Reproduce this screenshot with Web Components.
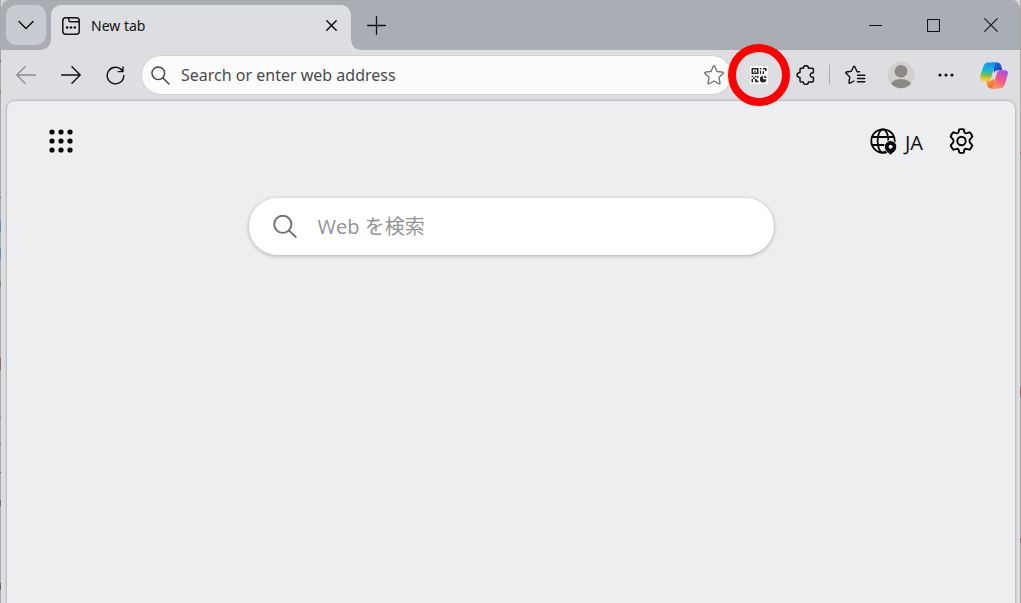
<!DOCTYPE html>
<html lang="ja">
<head>
<meta charset="utf-8">
<title>New tab</title>
<style>
  html, body { height: 100%; }
  body {
    margin: 0;
    /* slivers of the windows behind show at both edges */
    background:
      linear-gradient(#a9a9a9 60px, #8a6a50 60px 62px, #a9a9a9 62px 90px, #a87f5c 90px 93px, #a9a9a9 93px 197px, #6c6558 197px 198px, #a9a9a9 198px 220px, #6f8fb9 220px 232px, #a9a9a9 232px 248px, #6f8fb9 248px 260px, #a9a9a9 260px 281px, #3899b0 281px 284px, #9c8a45 284px 287px, #a9a9a9 287px 358px, #8d6a60 358px 370px, #a9a9a9 370px 417px, #7d8795 417px 419px, #a9a9a9 419px 444px, #666 444px 445px, #a9a9a9 445px 472px, #666 472px 473px, #a9a9a9 473px 500px, #796b73 500px 506px, #a9a9a9 506px 583px, #67647a 583px 590px, #a9a9a9 590px) 0 0 / 1px 100% no-repeat,
      linear-gradient(#a9a9a9 152px, #96736f 152px 154px, #a9a9a9 154px 387px, #a2605c 387px 397px, #a9a9a9 397px 538px, #96736f 538px 543px, #a9a9a9 543px) 100% 0 / 1px 100% no-repeat,
      #d9d9d9;
    color: #1b1b1b;
    font-family: "Noto Sans", "Noto Sans CJK JP", sans-serif;
  }
</style>
</head>
<body>
<browser-window>
  <tab-strip slot="tabs">
    <browser-tab>New tab</browser-tab>
  </tab-strip>
  <tool-bar slot="toolbar"></tool-bar>
  <new-tab-page language="JA"></new-tab-page>
</browser-window>

<script>
const line = (w, h, vb, body, sw = 1.4, extra = '') =>
  `<svg width="${w}" height="${h}" viewBox="${vb}" fill="none" stroke="currentColor" stroke-width="${sw}" stroke-linecap="round" stroke-linejoin="round" aria-hidden="true" ${extra}>${body}</svg>`;

const ICONS = {
  chevron: line(16, 10, '0 0 16 10', '<path d="M1 1.5 8 8.5 15 1.5"/>', 1.5),
  page: line(18, 18, '0 0 18 18', '<rect x=".8" y=".8" width="16.4" height="16.4" rx="3"/><path d="M6.8 1V3.2Q6.8 4.8 8.4 4.8H17" stroke-width="1.4"/><g fill="currentColor" stroke="none"><circle cx="5.2" cy="10.5" r="1.3"/><circle cx="9" cy="10.5" r="1.3"/><circle cx="12.8" cy="10.5" r="1.3"/></g>', 1.5),
  cross: line(11, 11, '0 0 11 11', '<path d="M.8.8 10.2 10.2M10.2.8.8 10.2"/>', 1.5),
  plus: line(19, 19, '0 0 19 19', '<path d="M9.5.7V18.3M.7 9.5H18.3"/>', 1.3),
  minimize: line(13, 13, '0 0 13 13', '<path d="M0 6.5H13"/>', 1),
  maximize: line(13, 13, '0 0 13 13', '<rect x=".5" y=".5" width="12" height="12" rx=".6"/>', 1.1),
  close: line(14, 14, '0 0 14 14', '<path d="M.7.7 13.3 13.3M13.3.7.7 13.3"/>', 1.1),
  back: line(20, 18, '0 0 20 18', '<path d="M.8 9H19.5M9 .8.8 9 9 17.2"/>', 1.3),
  forward: line(20, 18, '0 0 20 18', '<path d="M.5 9H19.2M11 .8 19.2 9 11 17.2"/>', 1.4),
  reload: line(19, 19, '0 0 19 19', '<path d="M16.6 5.2A8.3 8.3 0 1 0 17.8 9.5M17 1V5.6H12.2"/>', 1.4),
  search: line(19, 19, '0 0 19 19', '<circle cx="7.3" cy="7.3" r="6.3"/><path d="M11.9 11.9 18 18"/>', 1.4),
  bigSearch: line(24, 24, '0 0 24 24', '<circle cx="9.8" cy="9.3" r="8.6"/><path d="M16.2 15.6 22.7 22"/>', 1.9),
  star: line(20, 20, '0 0 20 20', '<path d="M9.3 1.3Q10 .1 10.7 1.3L13 6.5 18.6 7.2Q19.9 7.6 19 8.6L14.9 12.4 16 18Q16.1 19.3 14.9 18.8L10 16 5.1 18.8Q3.9 19.3 4 18L5.1 12.4 1 8.6Q.1 7.6 1.4 7.2L7 6.5Z"/>', 1.3),
  qr: `<svg width="18" height="18" viewBox="0 0 18 18" aria-hidden="true"><rect width="18" height="18" rx="1" fill="#fff"/><g fill="#252525"><path fill-rule="evenodd" d="M1.5 2h7v6h-7zM3 3.5v3h4v-3z"/><path d="M4.2 4.4h1.6v1.4H4.2zM9.9 2h1.6v1.5H9.9zM9.9 4.8h1.2V8H9.9zM13 2h3.5v3H15V3.5h-2zM12.6 5.2h1.5V8h-1.5zM1.5 9.7h1.7v1.5H1.5zM5 9.7h1.6v1.6H5zM3.2 11.3H5v1.6H3.2zM7.2 9.7h1.3v2.5H7.2zM1.5 12.9H3v3.4H1.5zM5 13h1.8v1.6h1.7v1.7H5z"/><path d="M13.1 10.1A3.2 3.2 0 1 0 16.3 13.3H13.1zM14.3 9.5v2.6h2.5Q16.5 10 14.3 9.5z"/></g></svg>`,
  puzzle: line(20, 20, '0 0 20 20', '<path d="M5.2 3.2H7.3C7.3-.1 12.5-.1 12.5 3.2H16.2Q17.4 3.2 17.4 4.4V7.8C13.2 7.1 13.2 13 17.4 12.3V15.7Q17.4 16.9 16.2 16.9H12.5C12.5 20.2 7.3 20.2 7.3 16.9H5.2Q4 16.9 4 15.7V12.4C.1 12.4.1 7.6 4 7.6V4.4Q4 3.2 5.2 3.2Z"/>', 1.5),
  favorites: line(21, 20, '0 0 21 20', '<path d="M12 6.5 9.8 1.7Q9.2.6 8.6 1.7L6.3 6.3 1.5 7Q.2 7.4 1.1 8.3L4.8 12 4 17.3Q3.9 18.6 5 18.1L9 16"/><path d="M12.3 6.8H14.5M12.5 10.2H19.8M12.5 13.5H19.8M12.5 16.8H19.8"/>', 1.4),
  avatar: `<svg width="28" height="28" viewBox="0 0 28 28" aria-hidden="true"><defs><clipPath id="round"><circle cx="14" cy="14" r="13.2"/></clipPath></defs><circle cx="14" cy="14" r="13.5" fill="#d2d0cc"/><g fill="#8b8886" clip-path="url(#round)"><circle cx="14" cy="10.2" r="6.3"/><ellipse cx="14" cy="25.4" rx="10.8" ry="7.5"/></g></svg>`,
  more: '<svg width="16" height="4" viewBox="0 0 16 4" fill="currentColor" aria-hidden="true"><circle cx="2" cy="2" r="1.6"/><circle cx="8" cy="2" r="1.6"/><circle cx="14" cy="2" r="1.6"/></svg>',
  copilot: `<svg width="28" height="27" viewBox="0 0 28 27" aria-hidden="true"><defs>
    <linearGradient id="l" x1=".4" y1="0" x2=".3" y2="1"><stop offset="0" stop-color="#1793ed"/><stop offset=".4" stop-color="#19b5d8"/><stop offset=".65" stop-color="#61bd68"/><stop offset=".9" stop-color="#f2cb1b"/></linearGradient>
    <linearGradient id="r" x1=".8" y1="0" x2=".3" y2="1"><stop offset="0" stop-color="#a64ee8"/><stop offset=".5" stop-color="#f0568d"/><stop offset="1" stop-color="#ff9a5b"/></linearGradient>
    <linearGradient id="t" x1="0" y1="0" x2="1" y2="1"><stop offset="0" stop-color="#176fe0"/><stop offset="1" stop-color="#173fbd"/></linearGradient>
    <linearGradient id="b" x1="0" y1="0" x2="1" y2="1"><stop offset="0" stop-color="#ffb43c"/><stop offset="1" stop-color="#ee523d"/></linearGradient></defs>
    <path d="M12 .5h5.5q2.6 0 3.4 2.5l1.5 5.2H18q-3 0-3.8 2.8z" fill="url(#t)"/>
    <path d="M16 26.5h-5.2q-2.6 0-3.3-2.5L6 18.6h4q3 0 3.8-2.8z" fill="url(#b)"/>
    <path d="M17.2.6Q15.3 1 14.5 4l-3.2 11.5q-.9 3.3-4 3.3H3.4Q-.8 18.8.4 14.1L3 5.2Q4.3.5 8.5.5z" fill="url(#l)"/>
    <path d="M10.8 26.4q2-.4 2.8-3.4l3.1-11.5q.9-3.3 4-3.3h3.9q4.2 0 3 4.7L25 21.8q-1.3 4.7-5.5 4.7z" fill="url(#r)"/></svg>`,
  apps: `<svg width="24" height="24" viewBox="0 0 24 24" fill="#000" aria-hidden="true">${[3, 12, 21].map(y => [3, 12, 21].map(x => `<circle cx="${x}" cy="${y}" r="2.6"/>`).join('')).join('')}</svg>`,
  globe: `<svg width="27" height="27" viewBox="0 0 27 27" fill="none" stroke="#000" stroke-width="1.8" aria-hidden="true"><circle cx="13" cy="13" r="11.7"/><ellipse cx="13" cy="13" rx="5.4" ry="11.7"/><path d="M2.3 9H23.7M2.3 17H16"/><path d="M20.6 12.6a6.2 6.2 0 0 1 6.2 6.2c0 3.6-3.6 6-6.2 8.2-2.6-2.2-6.2-4.6-6.2-8.2a6.2 6.2 0 0 1 6.2-6.2z" fill="#000" stroke="#edeef0" stroke-width="1"/><circle cx="20.6" cy="18.8" r="2" fill="#edeef0" stroke="none"/></svg>`,
  gear: line(25, 26, '0 0 25 26', '<path d="M10.2 1.4Q12.5.9 14.8 1.4L15.4 4.3Q15.7 5.3 17 5.3L20.6 4.3Q22.6 6 23.3 8.7L21 11.3Q20 12.8 21 14.7L23.3 17.3Q22.6 20 20.6 21.7L17 20.8Q15.7 20.7 15.4 21.8L14.8 24.6Q12.5 25.1 10.2 24.6L9.6 21.8Q9.3 20.7 8 20.8L4.4 21.7Q2.4 20 1.7 17.3L4 14.7Q5 12.8 4 11.3L1.7 8.7Q2.4 6 4.4 4.3L8 5.3Q9.3 5.3 9.6 4.3Z"/><circle cx="12.5" cy="13" r="4.2"/>', 1.9)
};

const define = (name, markup) => customElements.define(name, class extends HTMLElement {
  constructor() {
    super();
    this.attachShadow({ mode: 'open' }).innerHTML = markup(this);
  }
});

define('icon-button', host => `
  <style>
    :host { display: flex; flex: none; width: var(--button-width, 45px); height: var(--button-height, 40px); }
    button { display: flex; align-items: center; justify-content: center; width: 100%; padding: 0; border: 0; border-radius: var(--button-radius, 8px); background: var(--button-fill, transparent); color: inherit; }
    button:disabled { color: #8b8c90; }
    svg { display: block; flex: none; }
  </style>
  <button type="button" aria-label="${host.getAttribute('label')}" ${host.hasAttribute('disabled') ? 'disabled' : ''}>${ICONS[host.getAttribute('icon')]}</button>`);

define('browser-window', () => `
  <style>
    :host { display: flex; flex-direction: column; box-sizing: border-box; height: 100%; position: relative;
      border: 1px solid transparent; border-top-color: #aaaaab; border-bottom: 0; border-radius: 9px 9px 0 0; background: #dddee2; background-clip: padding-box; overflow: hidden; }
    main { display: flex; flex: 1; padding: 0 5px 0 6px; }
    ::slotted(new-tab-page) { flex: 1; }
  </style>
  <slot name="tabs"></slot>
  <slot name="toolbar"></slot>
  <main><slot></slot></main>`);

define('tab-strip', () => `
  <style>
    :host { display: flex; align-items: flex-start; padding: 4px 0 0 5px; background: #a9aeb5; color: #111; }
    .list { --button-width: 40px; --button-radius: 10px; --button-fill: #c8cbd0; }
    .add { --button-width: 32px; margin-left: 9px; }
    nav { display: flex; margin-left: auto; --button-width: 58px; }
    ::slotted(browser-tab) { margin-left: 5px; }
  </style>
  <icon-button class="list" icon="chevron" label="Tab actions"></icon-button>
  <slot></slot>
  <icon-button class="add" icon="plus" label="New tab"></icon-button>
  <nav aria-label="Window">
    <icon-button icon="minimize" label="Minimize"></icon-button>
    <icon-button icon="maximize" label="Maximize"></icon-button>
    <icon-button icon="close" label="Close"></icon-button>
  </nav>`);

define('browser-tab', () => `
  <style>
    :host { display: flex; align-items: center; box-sizing: border-box; position: relative; width: 300px; height: 45px; padding: 0 4px 4px 11px;
      border-radius: 10px 10px 0 0; background: #dddee2; font-size: 14px; line-height: 20px; color: #111; }
    :host::before, :host::after { content: ""; position: absolute; bottom: 0; width: 9px; height: 9px; }
    :host::before { right: 100%; background: radial-gradient(circle at 0 0, transparent 8px, #dddee2 9px); }
    :host::after { left: 100%; background: radial-gradient(circle at 100% 0, transparent 8px, #dddee2 9px); }
    .title { flex: 1; margin-left: 11px; }
    icon-button { --button-width: 32px; --button-height: 32px; }
    svg { flex: none; }
  </style>
  ${ICONS.page}
  <span class="title"><slot></slot></span>
  <icon-button icon="cross" label="Close tab"></icon-button>`);

define('tool-bar', () => `
  <style>
    :host { display: flex; align-items: center; box-sizing: border-box; height: 51px; padding: 0 4px 1px 2px; color: #111; }
    address-bar { flex: 1; margin: 0 4px 0 3px; }
    .extension { position: relative; margin-right: 2px; }
    .extension::after { content: ""; position: absolute; top: 50%; left: 50%; width: 46px; height: 46px; border: 8px solid #fe0000; border-radius: 50%; transform: translate(-50%, -50%); pointer-events: none; }
    .divider { width: 1px; height: 20px; margin: 0 3px 0 1px; background: #acadb1; }
    .copilot { margin-left: 3px; }
  </style>
  <icon-button icon="back" label="Back" disabled></icon-button>
  <icon-button icon="forward" label="Forward"></icon-button>
  <icon-button icon="reload" label="Refresh"></icon-button>
  <address-bar></address-bar>
  <icon-button class="extension" icon="qr" label="QR code"></icon-button>
  <icon-button icon="puzzle" label="Extensions"></icon-button>
  <span class="divider"></span>
  <icon-button icon="favorites" label="Favorites"></icon-button>
  <icon-button icon="avatar" label="Profile"></icon-button>
  <icon-button icon="more" label="Settings and more"></icon-button>
  <icon-button class="copilot" icon="copilot" label="Copilot"></icon-button>`);

define('address-bar', () => `
  <style>
    :host { display: flex; align-items: center; box-sizing: border-box; height: 40px; padding: 0 1px 0 9px; border: 1px solid #cfd0d3; border-radius: 20px; background: #fcfcfd; color: #424242; }
    input { flex: 1; min-width: 0; height: 32px; margin-left: 11px; padding: 0; border: 0; outline: 0; background: none; font: 16px/24px "Noto Sans", sans-serif; }
    input::placeholder { color: #4a4a4a; opacity: 1; }
    icon-button { --button-width: 32px; --button-height: 32px; color: #707070; }
  </style>
  ${ICONS.search}
  <input type="text" aria-label="Search or enter web address" placeholder="Search or enter web address">
  <icon-button icon="star" label="Add to favorites"></icon-button>`);

define('new-tab-page', host => `
  <style>
    :host { display: block; border-radius: 8px 8px 0 0; background: #edeef0; box-shadow: 0 0 2px 1px #b5b6ba; }
    header { display: flex; align-items: center; padding: 20px 34px 0; }
    .apps { --button-width: 40px; }
    .language { display: flex; align-items: center; gap: 8px; height: 40px; margin-left: auto; padding: 0; border: 0; background: none; color: #111; font: 20px/28px "Open Sans", "Noto Sans", sans-serif; }
    .language span { padding-top: 3px; }
    .settings { --button-width: 40px; margin-left: 18px; color: #000; }
    search-box { width: min(525px, 90%); margin: 37px auto 0; }
  </style>
  <header>
    <icon-button class="apps" icon="apps" label="App launcher"></icon-button>
    <button class="language" type="button">${ICONS.globe}<span>${host.getAttribute('language')}</span></button>
    <icon-button class="settings" icon="gear" label="Page settings"></icon-button>
  </header>
  <search-box></search-box>`);

define('search-box', () => `
  <style>
    :host { display: flex; align-items: center; box-sizing: border-box; height: 57px; padding: 0 24px; border-radius: 29px; background: #fff; box-shadow: 0 1px 4px rgba(0, 0, 0, .28); color: #717171; }
    input { flex: 1; min-width: 0; height: 40px; margin-left: 21px; padding: 0; border: 0; outline: 0; background: none; font: 20px/28px "Open Sans", "Noto Sans CJK JP", sans-serif; }
    input::placeholder { color: #949494; opacity: 1; }
  </style>
  ${ICONS.bigSearch}
  <input type="search" aria-label="Web を検索" placeholder="Web を検索">`);
</script>
</body>
</html>
